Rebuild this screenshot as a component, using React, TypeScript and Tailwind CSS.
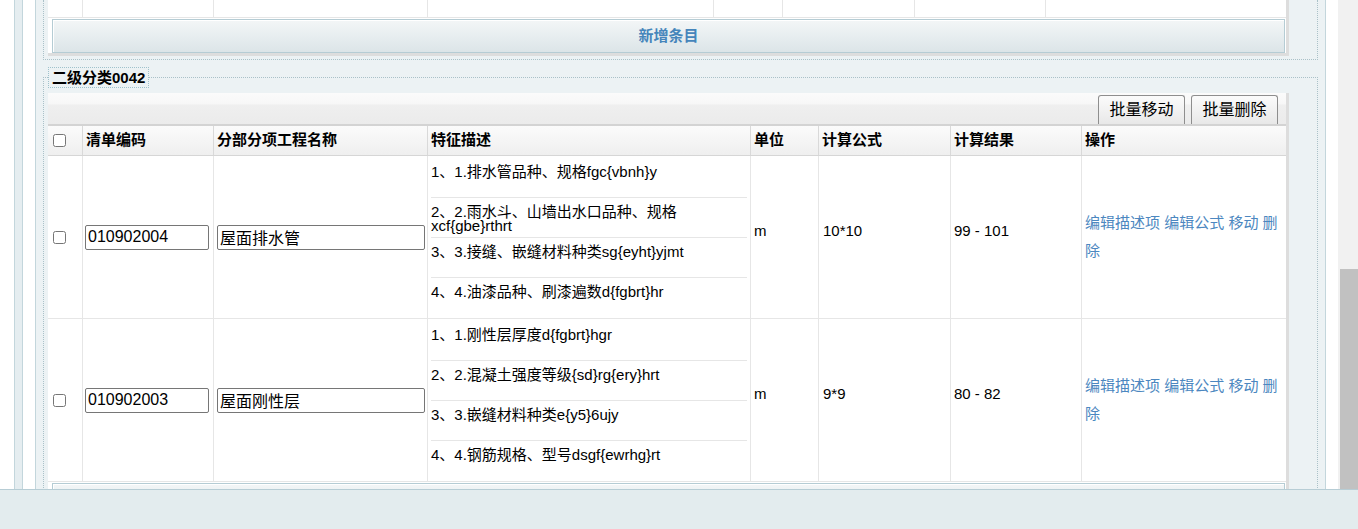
import React from "react";

const COLS1 = "grid grid-cols-[34px_131px_214px_286px_69px_132px_131px_241px]";
const COLS2 = "grid grid-cols-[34px_131px_214px_323px_68px_132px_131px_205px]";

type Row = {
  code: string;
  name: string;
  desc: string[][];
  unit: string;
  formula: string;
  result: string;
};

const rows: Row[] = [
  {
    code: "010902004",
    name: "屋面排水管",
    desc: [
      ["1、1.排水管品种、规格fgc{vbnh}y"],
      ["2、2.雨水斗、山墙出水口品种、规格", "xcf{gbe}rthrt"],
      ["3、3.接缝、嵌缝材料种类sg{eyht}yjmt"],
      ["4、4.油漆品种、刷漆遍数d{fgbrt}hr"],
    ],
    unit: "m",
    formula: "10*10",
    result: "99 - 101",
  },
  {
    code: "010902003",
    name: "屋面刚性层",
    desc: [
      ["1、1.刚性层厚度d{fgbrt}hgr"],
      ["2、2.混凝土强度等级{sd}rg{ery}hrt"],
      ["3、3.嵌缝材料种类e{y5}6ujy"],
      ["4、4.钢筋规格、型号dsgf{ewrhg}rt"],
    ],
    unit: "m",
    formula: "9*9",
    result: "80 - 82",
  },
];

const headers = ["清单编码", "分部分项工程名称", "特征描述", "单位", "计算公式", "计算结果", "操作"];

function AddButton({ label }: { label?: string }) {
  return (
    <div className="pt-[1px] pl-[4px] pr-[1px] bg-white">
      <button className="w-full h-[34px] border border-[#b5ccd4] bg-linear-to-b from-[#f3f6f7] to-[#dce5e8] shadow-[inset_1px_1px_0_#ffffff] text-[15px] font-bold text-[#4585bb] leading-[20px]">
        {label}
      </button>
    </div>
  );
}

function DataRow({ r }: { r: Row }) {
  const cell = "border-l border-[#e6e6e6]";
  return (
    <div className={`${COLS2} border-b border-[#e6e6e6] bg-white`}>
      <div className="flex items-center pl-[5px]">
        <input type="checkbox" className="m-0 w-[13px] h-[13px]" />
      </div>
      <div className={`${cell} flex items-center pl-[2px]`}>
        <input
          readOnly
          defaultValue={r.code}
          className="w-[124px] h-[25px] border border-[#767676] rounded-[2px] px-[2px] text-[16px] leading-[20px] outline-none bg-white"
        />
      </div>
      <div className={`${cell} flex items-center pl-[3px]`}>
        <input
          readOnly
          defaultValue={r.name}
          className="w-[208px] h-[25px] border border-[#767676] rounded-[2px] px-[2px] text-[16px] leading-[20px] outline-none bg-white"
        />
      </div>
      <div className={`${cell} px-[3px] pt-[2px]`}>
        {r.desc.map((lines, i) => (
          <div
            key={i}
            className={`h-[40px] pt-[7px] leading-[14px] ${i < 3 ? "border-b border-[#e6e6e6]" : ""}`}
          >
            {lines.map((l, j) => (
              <div key={j}>{l}</div>
            ))}
          </div>
        ))}
      </div>
      <div className={`${cell} flex items-center px-[3px] pb-[11px]`}>{r.unit}</div>
      <div className={`${cell} flex items-center pl-[4px] pb-[11px]`}>{r.formula}</div>
      <div className={`${cell} flex items-center px-[3px] pb-[11px]`}>{r.result}</div>
      <div className={`${cell} flex items-center px-[3px] leading-[28px] text-[#4c87c0]`}>
        <div>
          <a>编辑描述项</a> <a>编辑公式</a> <a>移动</a> <a>删除</a>
        </div>
      </div>
    </div>
  );
}

export default function App() {
  return (
    <div className="w-[1358px] h-[529px] overflow-hidden flex flex-col bg-white text-black font-['Liberation_Sans','Noto_Sans_CJK_SC',sans-serif]">
      <div className="h-[489px] flex overflow-hidden">
        <div className="w-[15px] shrink-0 bg-white border-r border-[#c3d6dc]" />
        <div className="w-[7px] shrink-0 bg-[#e5edf0]" />
        <div className="w-[14px] shrink-0 bg-white border-x border-[#c3d6dc]" />
        <div className="w-[1289px] shrink-0 bg-[#ecf2f4] px-[7px]">
          {/* previous category, scrolled so only its end is visible */}
          <div className="border-x border-b border-dotted border-[#aac1c8] pl-[4px] pr-[28px] pb-[3px]">
            <div className="border-r-[3px] border-b-[3px] border-[#dddddd] bg-white">
              <div className={`${COLS1} h-[18px] border-b border-[#e6e6e6]`}>
                <div />
                <div className="border-l border-[#e6e6e6]" />
                <div className="border-l border-[#e6e6e6]" />
                <div className="border-l border-[#e6e6e6]" />
                <div className="border-l border-[#e6e6e6]" />
                <div className="border-l border-[#e6e6e6]" />
                <div className="border-l border-[#e6e6e6]" />
                <div className="border-l border-[#e6e6e6]" />
              </div>
              <AddButton label="新增条目" />
            </div>
          </div>

          <fieldset className="mt-[7px] border border-dotted border-[#aac1c8] pl-[4px] pr-[28px] pt-[5px]">
            <legend className="border border-dotted border-[#9fc2cc] px-[3px] text-[15px] font-bold leading-[19px]">
              二级分类0042
            </legend>
            <div className="border-r-[3px] border-[#dddddd] bg-white text-[15px]">
              <div className="h-[33px] border-b-2 border-[#d3d3d3] bg-[linear-gradient(#fbfbfb_0%,#f7f7f7_36%,#efefef_38%,#ebebeb_100%)] flex justify-end items-end gap-[6px] pr-[8px]">
                <button className="h-[29px] w-[87px] border border-b-0 border-[#8e8e8e] rounded-t-[3px] bg-linear-to-b from-[#fbfbfb] to-[#e8e8e8] text-[16px] leading-[20px]">
                  批量移动
                </button>
                <button className="h-[29px] w-[87px] border border-b-0 border-[#8e8e8e] rounded-t-[3px] bg-linear-to-b from-[#fbfbfb] to-[#e8e8e8] text-[16px] leading-[20px]">
                  批量删除
                </button>
              </div>
              <div className={`${COLS2} h-[30px] border-b border-[#d6d6d6] bg-linear-to-b from-[#fbfbfb] to-[#efefef] font-bold`}>
                <div className="flex items-center pl-[5px]">
                  <input type="checkbox" className="m-0 w-[13px] h-[13px]" />
                </div>
                {headers.map((h) => (
                  <div key={h} className="flex items-center border-l border-[#d9d9d9] px-[3px]">
                    {h}
                  </div>
                ))}
              </div>
              {rows.map((r) => (
                <DataRow key={r.code} r={r} />
              ))}
              <AddButton />
            </div>
          </fieldset>
        </div>
        <div className="w-[13px] shrink-0 bg-white border-l border-[#c3d6dc]" />
        <div className="w-[20px] shrink-0 bg-[#f1f1f1] flex flex-col">
          <div className="h-[269px] shrink-0" />
          <div className="flex-1 ml-[2px] bg-[#c1c1c1]" />
        </div>
      </div>
      <div className="flex-1 bg-[#e3ecee] border-t border-[#b7cdd5]" />
    </div>
  );
}
